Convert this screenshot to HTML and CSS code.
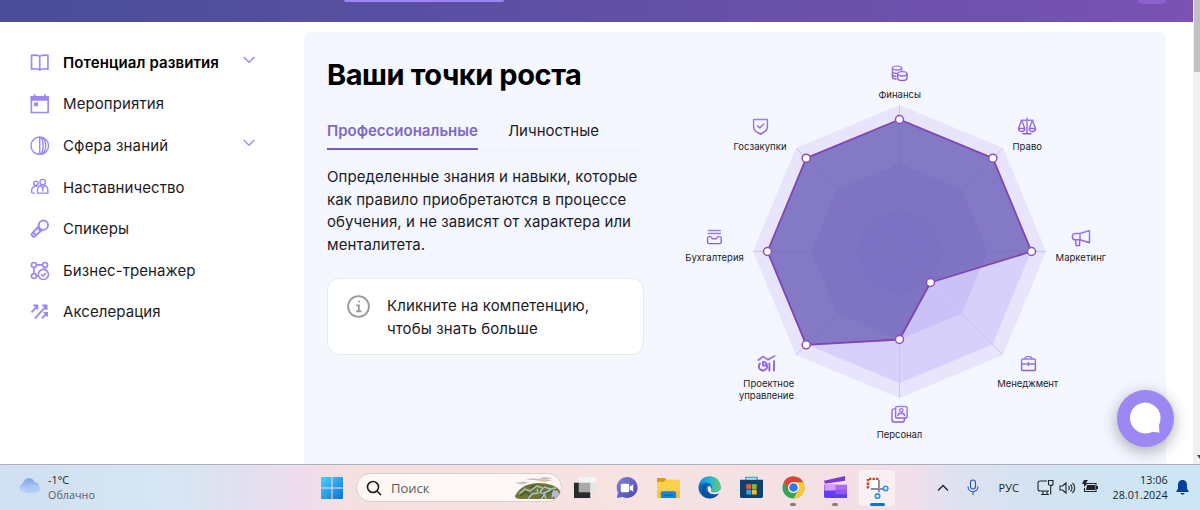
FILE: index.html
```html
<!DOCTYPE html>
<html lang="ru">
<head>
<meta charset="utf-8">
<title>Ваши точки роста</title>
<link rel="stylesheet" href="styles.css">
</head>
<body>
<div class="screen">
  <div class="browser">
    <div class="page">
      <header class="topbar"><span class="topbar-tab"></span><span class="topbar-avatar"></span></header>
      <div class="content">
        <nav class="sidebar">
          <a class="nav-item active"><svg class="nav-icon" viewBox="0 0 20 20"><path d="M10 3.200C7.600 2 4.500 2 1.600 2.400V16.500C4.500 16 7.600 16.200 10 17.400C12.400 16.200 15.500 16 18.400 16.500V2.400C15.500 2 12.400 2 10 3.200V17.400"/></svg><span>Потенциал развития</span><svg class="chev" viewBox="0 0 12 8"><path d="M.7 1L6 6.300L11.300 1"/></svg></a>
          <a class="nav-item"><svg class="nav-icon" viewBox="0 0 20 20"><path d="M1.400 3h17.200v16H1.400z"/><path class="solid" d="M.7 2.300h18.600V7H.7zM4 .2h1.600v3H4zM14.400.2H16v3h-1.600zM4.200 8.800h4v3.800h-4z"/></svg><span>Мероприятия</span></a>
          <a class="nav-item wide"><svg class="nav-icon thin" viewBox="0 0 20 20"><circle cx="10" cy="10" r="9"/><path d="M10 1v18M12.800 1.500c4.400 4 4.400 13 0 17M11.300 1.400c3 4 3 13.200 0 17.200"/></svg><span>Сфера знаний</span><svg class="chev" viewBox="0 0 12 8"><path d="M.7 1L6 6.300L11.300 1"/></svg></a>
          <a class="nav-item"><svg class="nav-icon thin" viewBox="0 0 20 20"><circle cx="13" cy="5.200" r="2.800"/><circle cx="6" cy="6.600" r="2.200"/><path d="M7.700 16.500v-3.200a5.300 5.300 0 0 1 10.600 0v3.200zM13 10.500v4.300M11 9l2 2 2-2M1.700 16.500v-3.200a4.200 4.200 0 0 1 5.600-3.500M1.700 16.500H5"/></svg><span>Наставничество</span></a>
          <a class="nav-item"><svg class="nav-icon bold" viewBox="0 0 20 20"><circle cx="13.700" cy="6.300" r="4.800"/><path d="M9 7.200L1.800 15.200Q1.200 16 2 16.800L3 18q.8.700 1.600 0L12.600 11M7.600 9l3.300 3.200M3.500 14l2.500 2.500"/></svg><span>Спикеры</span></a>
          <a class="nav-item"><svg class="nav-icon" viewBox="0 0 20 20"><circle cx="4" cy="4" r="2.500"/><circle cx="15.500" cy="4" r="2.500"/><circle cx="4" cy="15.500" r="2.500"/><path d="M6.500 4H13M4 6.500V13M15.500 6.500v2M6.500 15.500h2"/><circle cx="13.700" cy="13.800" r="5.200"/><path d="M11.400 13.600l1.800 1.800 3-3"/></svg><span>Бизнес-тренажер</span></a>
          <a class="nav-item"><svg class="nav-icon bold" viewBox="0 0 20 20"><path d="M1.600 10.600L7 4.600M5 17L16.300 4.500M12.200 16.700L17 12M3.500 3.600h4v4M12.600 3.600h4.400v4.600M14 11.200h3.500v3.600"/></svg><span>Акселерация</span></a>
        </nav>
        <main class="card">
          <section class="info">
            <h1>Ваши точки роста</h1>
            <div class="tabs"><span class="tab selected">Профессиональные</span><span class="tab">Личностные</span></div>
            <p class="desc">Определенные знания и навыки, которые<br>как правило приобретаются в процессе<br>обучения, и не зависят от характера или<br>менталитета.</p>
            <div class="hint"><svg class="hint-icon" viewBox="0 0 24 24"><circle cx="12" cy="12" r="10"/><path d="M10 11h2.300v5.300M9.800 16.500h5"/><circle class="dot" cx="12.500" cy="7.200" r="1"/></svg><p>Кликните на компетенцию,<br>чтобы знать больше</p></div>
          </section>
          <svg class="radar" viewBox="666 32 500 432">
            <defs>
              <linearGradient id="ic" x1="0" y1="0" x2="0" y2="20" gradientUnits="userSpaceOnUse"><stop stop-color="#9d87f3"/><stop offset="1" stop-color="#8b4fd0"/></linearGradient>
              <polygon id="oct" points="0,-1 .7071,-.7071 1,0 .7071,.7071 0,1 -.7071,.7071 -1,0 -.7071,-.7071"/>
            </defs>
            <g transform="translate(899.500 251.500)">
              <use href="#oct" transform="scale(146.500)" fill="#e8e4fc"/>
              <use href="#oct" transform="scale(131.500)" fill="#d7d0fa"/>
              <use href="#oct" transform="scale(88)" fill="#cac1f7"/>
              <use href="#oct" transform="scale(44)" fill="#c5bbf6"/>
              <path class="spokes" d="M0-146V146M-146 0H146M-103.500-103.500L103.500 103.500M103.500-103.500L-103.500 103.500"/>
              <polygon class="score" points="0,-132 93.300,-93.300 132,0 31,31 0,88 -93.300,93.300 -132,0 -93.300,-93.300"/>
              <g class="points"><circle cy="-132" r="4"/><circle cx="93.300" cy="-93.300" r="4"/><circle cx="132" r="4"/><circle cx="31" cy="31" r="4"/><circle cy="88" r="4"/><circle cx="-93.300" cy="93.300" r="4"/><circle cx="-132" r="4"/><circle cx="-93.300" cy="-93.300" r="4"/></g>
            </g>
            <g class="icons">
              <g transform="translate(890 64)"><ellipse cx="7" cy="4" rx="4.600" ry="1.900"/><path d="M2.400 4v9c0 1.200 1.600 2 3.600 2M2.400 7.200c0 1.200 2 2 4 2M2.400 10.400c0 1.200 1.600 1.900 3.400 1.900M11.600 4v2.500"/><ellipse cx="12.300" cy="9.800" rx="4.700" ry="2.200"/><path d="M7.600 9.800v4.400c0 1.300 2.100 2.200 4.700 2.200s4.700-.9 4.700-2.200V9.800"/></g>
              <g transform="translate(751 117)"><path d="M2.600 2.500h13.800v7.300c0 3.300-3 5.700-6.900 7.200c-3.900-1.500-6.900-3.900-6.900-7.200zM6.400 8.700l2.400 2.300 3.900-4"/></g>
              <g transform="translate(1017 117)"><path d="M10 1v15.600M6 16.800h8M4 3.200h12M4.600 3.200L1.500 11.500M4.600 3.200L7.800 11.500M15.400 3.200L12.200 11.500M15.400 3.200L18.500 11.500M1.500 11.500h6.300c0 4-6.300 4-6.300 0zM12.200 11.500h6.300c0 4-6.300 4-6.300 0z"/></g>
              <g transform="translate(705 228)"><path d="M3.300 2.500h12M3.300 5.500h12M3.800 8.600h2c1 0 .8 2.200 1.700 2.200h3.600c.9 0 .7-2.200 1.700-2.200h2q1.400 0 1.400 1.400v4q0 1.600-1.600 1.600H4.200q-1.600 0-1.600-1.600v-4q0-1.400 1.200-1.400z"/></g>
              <g transform="translate(1071 229)"><path d="M9 4.500L18.500 1.500v12.300L9 10.800zM9 4.500H4.500a3.100 3.100 0 0 0 0 6.300H9M4.600 11l.6 5.600h3.300L8.800 11"/></g>
              <g class="heavy" transform="translate(757 354)"><path d="M1.500 6L6 2.500l5 3.200L17.600 2M12.400 9.500v7M17 7v9.500M6 8v3.500h4A4.100 4.100 0 1 1 3 9.500M7 7.800a4 4 0 0 1 3 3.500"/></g>
              <g transform="translate(1019 355)"><rect x="2.600" y="4" width="13.800" height="11.500" rx="1"/><path d="M6 4c0-3.500 7-3.500 7 0M2.600 9h13.800M9.500 7.500v3"/></g>
              <g transform="translate(890 405)"><rect x="5.600" y="1.500" width="11.500" height="11.500" rx="1.500"/><path d="M5.600 4H4Q2 4 2 6v9q0 2 2 2h8.500q2 0 2-3.500M8 10.500c0-3 6.500-3 6.500 0"/><circle cx="11.300" cy="5.300" r="1.700"/></g>
            </g>
            <g class="labels">
              <text x="878.500" y="97.500" textLength="42.500">Финансы</text>
              <text x="733.500" y="149.800" textLength="53">Госзакупки</text>
              <text x="1012.500" y="149.800" textLength="29.500">Право</text>
              <text x="685.300" y="260.800" textLength="58.500">Бухгалтерия</text>
              <text x="1055.500" y="260.800" textLength="50.500">Маркетинг</text>
              <text x="743.300" y="387.300" textLength="51">Проектное</text>
              <text x="739" y="399.300" textLength="55">управление</text>
              <text x="997.300" y="387.300" textLength="61">Менеджмент</text>
              <text x="876.800" y="437.600" textLength="45.500">Персонал</text>
            </g>
          </svg>
        </main>
      </div>
      <div class="chat"><svg viewBox="0 0 34 34"><path d="M16.500 1.500a15.500 15.500 0 1 0 7 29.300l7 1-.6-7.800A15.500 15.500 0 0 0 16.500 1.500z"/></svg></div>
    </div>
    <div class="scroll"><div class="thumb"></div><svg viewBox="0 0 7 5"><path d="M4 0h6L7 4z"/></svg></div>
  </div>
  <footer class="taskbar">
    <div class="weather"><svg viewBox="0 0 24 17"><defs><linearGradient id="cl" x2="0" y2="1"><stop stop-color="#7ba4ec"/><stop offset="1" stop-color="#c4dafb"/></linearGradient></defs><path fill="url(#cl)" d="M5.500 16A5 5 0 0 1 5 6.500C7-.5 15.500-.5 17.300 5A5.600 5.600 0 0 1 18 16z"/><path fill="#a9c6f6" opacity=".7" d="M7 15.500c1-6 5-8 9-8s7 2 7 4.500S21 16 18 16H7z"/></svg><div><div class="temp">-1°C</div><div class="sky">Облачно</div></div></div>
    <svg class="start" viewBox="0 0 22 22"><defs><linearGradient id="win" x2="1" y2="1"><stop stop-color="#4fd0fb"/><stop offset="1" stop-color="#0871d2"/></linearGradient></defs><path fill="url(#win)" d="M1 0h9.500v10.500H0V1q0-1 1-1zM11.500 0H21q1 0 1 1v9.500H11.500zM0 11.500h10.500V22H1q-1 0-1-1zM11.500 11.500H22V21q0 1-1 1h-9.500z"/></svg>
    <div class="search"><svg class="lens" viewBox="0 0 16 16"><circle cx="7" cy="7" r="5.500"/><path d="M11 11l4 4"/></svg><span>Поиск</span>
      <svg class="art" viewBox="0 0 46 24"><path fill="#cbbccc" d="M11 4q7-3 12-1l6-2 9 1-7 1.500-8 .5zM0 7l9-1.500 5 1L7 8.500z"/><path fill="#e5b392" d="M20 5l10-1.500 8 .6-7 1.300z"/><path fill="#6f7437" d="M0 20Q6 8 22 7q18 0 23 8v6q-3 2-9 2H6q-6 0-6-3z"/><path fill="none" stroke="#a9c5d3" stroke-width="1.400" d="M4 18l6-5 5 2 7-5 6 2-3 4 4 3-3 4M13 23l4-5 6-1-1-4M29 11l6 2 6-1M31 23l-2-6 7-3M37 22l1-6"/><path fill="none" stroke="#30432e" d="M5 20l6-4 4 3M20 9l-5 3M25 22l3-4M32 18l5-3"/><path fill="#b8b8d0" d="M38 14l5 1 2 5-4 3-3-3z"/></svg></div>
    <div class="apps">
      <div class="app"><svg viewBox="0 0 24 24"><path fill="#292a2b" d="M1 7h17v16H1z"/><path fill="#a9a9a9" d="M6 7h12v10H6z"/><path fill="#f4f3f3" d="M6 1h18v6H6z"/><path fill="#e6e5e5" d="M18 7h6v10h-6z"/></svg></div>
      <div class="app"><svg viewBox="0 0 24 24"><defs><linearGradient id="chatg" x2="1" y2="1"><stop stop-color="#8583d1"/><stop offset="1" stop-color="#4447b7"/></linearGradient></defs><path fill="url(#chatg)" d="M12 1A11 11 0 1 1 8 22l-6 1 1-6A11 11 0 0 1 12 1z"/><rect x="6" y="8" width="9" height="9" rx="1.500" fill="#fff"/><path fill="#fff" d="M15.700 11L19 8.500v8l-3.300-2.500z"/></svg></div>
      <div class="app"><svg viewBox="0 0 24 24"><path fill="#d99a0d" d="M0 2h8l2 2v5H0z"/><path fill="#fbd04a" d="M9 4h14q1 0 1 1v18H0V6h7z"/><path fill="#f6c53d" d="M0 15h24v8H0z"/><path fill="#1684d4" d="M4 23v-5q0-2 2-2h12q2 0 2 2v5z"/><path stroke="#075895" d="M7 20h10"/></svg></div>
      <div class="app"><svg viewBox="0 0 24 24"><defs><linearGradient id="edge" x1="0" x2="1"><stop stop-color="#168be0"/><stop offset=".5" stop-color="#27b5d9"/><stop offset="1" stop-color="#61ce67"/></linearGradient></defs><circle cx="12" cy="12" r="11.500" fill="#1168b8"/><path fill="url(#edge)" d="M1 10C3-2 21-3 23.500 9.500c.3 5-2.500 7.500-7 7.500-3 0-3.500-1.500-2.500-3C16 9.500 12 6.500 8 7c-4 0-6.500 2.500-7 3z"/><path fill="#0b4f9e" d="M8 12c0 8 8 10 14 6-5 8-17 6-18-1-.5-4 1-7 4-9z"/><path fill="#f4e5e7" d="M14 14c-1 1.500-.5 3 2.500 3 3 0 5-1 6.500-3l1 2-2 2c-5 2-12 1-12-5 0-4 4-3 4 1z"/></svg></div>
      <div class="app"><svg viewBox="0 0 24 24"><path fill="none" stroke="#36b1e8" stroke-width="1.500" d="M6 5V1.500h12V5"/><path fill="#12406d" d="M0 4h24v17q0 2-2 2H2q-2 0-2-2z"/><path fill="#f2572d" d="M6.600 8.500h5v5h-5z"/><path fill="#80bb35" d="M12.400 8.500h5v5h-5z"/><path fill="#30a7e4" d="M6.600 14.300h5v5h-5z"/><path fill="#fbbd1d" d="M12.400 14.300h5v5h-5z"/></svg></div>
      <div class="app running"><svg viewBox="0 0 24 24"><circle cx="12" cy="12" r="11.500" fill="#32a552"/><path fill="#e54032" d="M2 6a11.500 11.500 0 0 1 20 0.500H12L7 15z"/><path fill="#fcc92e" d="M12 6.500h10.200A11.500 11.500 0 0 1 12 23.500l5-8.500z"/><circle cx="12" cy="12" r="5.800" fill="#fff"/><circle cx="12" cy="12" r="4.500" fill="#3579e8"/></svg></div>
      <div class="app running"><svg viewBox="0 0 24 24"><path fill="#7d3bd0" d="M0 5L22 0v5L1 8z"/><path fill="#b16bee" d="M0 9h24v7H0z"/><path fill="#613dec" d="M0 15h24v8H2q-2 0-2-2z"/><path fill="#d99bfa" d="M1 9h11v6H1z"/><path fill="#8d5af2" d="M12 14h12v5H12z"/></svg></div>
      <div class="app current"><svg viewBox="0 0 24 24"><path fill="#fff" d="M1 2h13v13H1z"/><path fill="none" stroke="#d63b25" stroke-width="2.500" stroke-dasharray="2.500 1.200" d="M2 13V3h11"/><path fill="none" stroke="#858e99" stroke-width="2" d="M13.500 4v13M5 13.500h13"/><g fill="none" stroke="#2499dc" stroke-width="1.700"><circle cx="20.500" cy="13" r="2.300"/><circle cx="12" cy="21" r="2.300"/></g></svg></div>
    </div>
    <div class="tray">
      <svg class="up" viewBox="0 0 12 8"><path d="M1 6.500l5-5 5 5"/></svg>
      <svg class="mic" viewBox="0 0 12 16"><rect x="3.500" y="1" width="5" height="9" rx="2.500"/><path d="M1 7.500c0 7 10 7 10 0M6 13v3"/></svg>
      <span class="lang">РУС</span>
      <svg class="net" viewBox="0 0 17 17"><path d="M10 2H3Q1 2 1 4v6q0 2 2 2h9M4 15.500h8M6 12v3M10 12v3M11.500 1.500H16v4q-2 2-4.500 0zM13.700 7v8.500"/></svg>
      <svg class="vol" viewBox="0 0 17 14"><path d="M1 5h2.500L7 2v10L3.500 9H1zM9.500 5c1 1 1 3 0 4M11.500 3.500c2 2 2 5 0 7M13.500 2c3 3 3 7 0 10"/></svg>
      <svg class="bat" viewBox="0 0 17 13"><path d="M5 3.500h9v8H2.500V8"/><path class="fill" d="M5 5h8v5H4zM14 6h2v3h-2zM2 0h4L4 3h2L2 7V4H0z"/></svg>
      <div class="clock"><div class="time">13:06</div><div class="date">28.01.2024</div></div>
      <svg class="bell" viewBox="0 0 13 15"><path d="M6.500 0C3.500 0 2 2.300 2 5v3.500L0 12h13l-2-3.500V5C11 2.300 9.500 0 6.500 0zM4.500 13h4c0 2-4 2-4 0z"/></svg>
    </div>
  </footer>
</div>
</body>
</html>
```
FILE: styles.css
```css
* { box-sizing: border-box; }
body { margin: 0; background: #fff; font-family: Inter, "Noto Sans", sans-serif; }
h1, p { margin: 0; }
svg { display: block; flex: none; }
.screen { width: 1200px; height: 510px; display: flex; flex-direction: column; overflow: hidden; }
.browser { display: flex; height: 464px; flex: none; }
.page { position: relative; width: 1193px; overflow: hidden; }
.scroll { width: 7px; background: #f0f0f0; display: flex; flex-direction: column; justify-content: space-between; padding-bottom: 4px; }
.thumb { height: 72px; margin-left: 1px; background: #c1c1c1; }
.scroll svg { width: 7px; height: 5px; fill: #444; }
.topbar { height: 22px; background: linear-gradient(90deg, #484e97, #7952b3); display: flex; justify-content: space-between; padding: 0 27px 0 344px; }
.topbar-tab { width: 160px; height: 2px; background: #9d87f3; border-radius: 0 0 6px 6px; }
.topbar-avatar { width: 28px; height: 4px; background: #8a5fd0; border-radius: 0 0 50% 50%; }
.content { display: flex; padding-top: 10px; height: 442px; }
.sidebar { width: 304px; padding: 9.500px 0 0 30px; display: flex; flex-direction: column; flex: none; }
.nav-item { height: 41.600px; display: flex; align-items: center; font-size: 15px; letter-spacing: .09px; color: #1b1b1f; width: 225px; white-space: nowrap; }
.wide { letter-spacing: .16px; }
.nav-icon { width: 19.500px; height: 19.500px; margin-right: 13.500px; fill: none; stroke: #9d87f3; stroke-width: 1.650; }
.thin { stroke-width: 1.450; }
.bold { stroke-width: 1.900; }
.nav-icon .solid { fill: #9d87f3; stroke: none; }
.chev { width: 12px; height: 8px; margin: -4px 0 0 auto; fill: none; stroke: #9d87f3; stroke-width: 1.300; }
.active { font-weight: 600; color: #000; }
.card { display: flex; width: 862px; height: 432px; background: #f4f7ff; border-radius: 8px 8px 0 0; }
.info { width: 362px; padding: 24px 22px 0 23px; flex: none; }
h1 { font-size: 29px; line-height: 38px; font-weight: 700; letter-spacing: -.45px; color: #000; white-space: nowrap; }
.tabs { display: flex; gap: 30px; margin-top: 19px; height: 38px; border-bottom: 1px solid #eff2fb; font-size: 15px; line-height: 36px; color: #1b1b1f; white-space: nowrap; width: 316px; }
.selected { font-weight: 600; color: #7e67c8; border-bottom: 2px solid #7a5bbb; }
.desc { margin-top: 15px; font-size: 15px; letter-spacing: .08px; line-height: 22.700px; color: #1b1b1f; white-space: nowrap; }
.hint { margin-top: 21px; width: 317px; height: 77px; border: 1px solid #e8e9ed; border-radius: 12px; background: #fff; display: flex; padding: 16px 18px; gap: 16px; font-size: 15px; letter-spacing: .1px; line-height: 22.700px; color: #1b1b1f; white-space: nowrap; }
.hint-icon { width: 25px; height: 25px; margin-top: -1px; fill: none; stroke: #999; stroke-width: 1.800; }
.hint-icon .dot { fill: #999; stroke: none; }
.radar { width: 500px; height: 432px; }
.spokes { fill: none; stroke: #cbc2f7; stroke-width: 1; }
.score { fill: rgba(86, 73, 168, .65); stroke: #8045b2; stroke-width: 1.800; stroke-linejoin: round; }
.points { fill: #fff; stroke: #8f4db5; stroke-width: 1.500; }
.icons { fill: none; stroke: url(#ic); stroke-width: 1.450; stroke-linejoin: round; stroke-linecap: round; }
.heavy { stroke-width: 1.900; }
.labels { font-size: 9.500px; fill: #1b1b1f; }
.chat { position: absolute; left: 1117px; top: 389.500px; width: 57px; height: 57px; border-radius: 50%; background: #9d87f3; box-shadow: 0 4px 16px rgba(0, 0, 0, .32); display: flex; align-items: center; justify-content: center; }
.chat svg { width: 34px; height: 34px; fill: #fff; }
.taskbar { height: 46px; flex: none; display: flex; align-items: center; border-top: 1px solid #aeb1bb; font-family: "Open Sans", "Noto Sans", sans-serif; background: linear-gradient(90deg, #d0dff1 0, #d6e6f3 160px, #dfe1f1 235px, #efdced 300px, #f4e1df 350px, #f6e3e1 600px, #f3e0e5 850px, #f1dfea 910px, #dfe1f0 955px, #d2e3f2 1050px, #cbe6f4 1200px); }
.weather { display: flex; width: 320px; padding-left: 18px; gap: 7px; align-items: center; font-size: 10.800px; line-height: 15px; color: #20262c; margin-top: -2px; }
.weather svg { width: 23px; height: 17px; margin-top: -3px; }
.sky { color: #596069; }
.start { width: 22px; height: 22px; margin: 1px 13px 0 1px; }
.search { width: 206px; height: 29px; border: 1px solid #decccb; border-radius: 15px; background: #fdf7f6; display: flex; align-items: center; overflow: hidden; font-size: 13px; color: #5c5859; padding-left: 9px; }
.lens { width: 16px; height: 16px; margin-right: 9px; fill: none; stroke: #1c1c1c; stroke-width: 1.600; }
.art { width: 46px; height: 24px; margin-left: auto; }
.apps { display: flex; margin-left: 4.500px; gap: 5.800px; }
.app { width: 36px; height: 36px; display: flex; flex-direction: column; align-items: center; justify-content: center; position: relative; }
.app svg { width: 23px; height: 23px; }
.running::after, .current::after { content: ""; position: absolute; bottom: 0; width: 6px; height: 3px; border-radius: 2px; background: #858080; }
.current { background: #faf0f3; border-radius: 4px; }
.current::after { width: 15px; background: #0875d1; }
.tray { display: flex; align-items: center; margin-left: 41.500px; flex: none; color: #202428; }
.tray svg { fill: none; stroke: #202428; stroke-width: 1.100; }
.tray .up { width: 12px; height: 8px; stroke-width: 1.400; }
.tray .mic { width: 12px; height: 16px; margin-left: 18px; margin-top: -1px; stroke: #255bb0; }
.lang { font-size: 11px; margin-left: 20px; width: 38px; }
.tray .net { width: 17px; height: 17px; }
.tray .vol { width: 17px; height: 14px; margin-left: 5px; }
.tray .bat { width: 17px; height: 13px; margin-left: 6px; margin-top: -2px; }
.tray .bat .fill { fill: #202428; stroke: none; }
.clock { width: 69px; text-align: right; font-size: 10.800px; line-height: 15px; margin-top: -2px; }
.tray .bell { width: 13px; height: 15px; margin-left: 8px; fill: #063e9b; stroke: none; }
```
